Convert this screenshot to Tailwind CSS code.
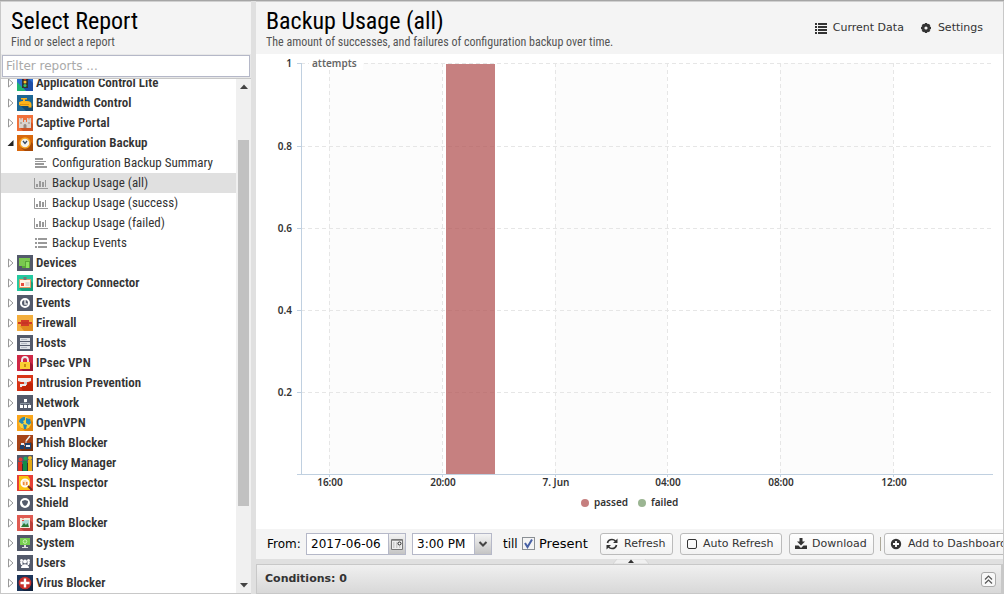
<!DOCTYPE html>
<html lang="en">
<head>
  <meta charset="UTF-8">
  <meta name="viewport" content="width=device-width, initial-scale=1.0">
  <title>Reports</title>
  <script src="https://cdn.jsdelivr.net/npm/@tailwindcss/browser@4"></script>
</head>
<body class="h-screen overflow-hidden flex bg-[#e0e0e0] border-t border-[#a5a5a5] text-[#333] font-['Roboto_Condensed','Liberation_Sans_Narrow',Roboto,sans-serif]">

  <!-- Report tree -->
  <aside class="w-[251px] shrink-0 flex flex-col bg-white border-l border-b border-[#c8c8c8]">
    <header class="h-[53px] shrink-0 bg-[#f4f4f4] border-t border-[#d0d0d0] pl-2.5 pt-[5px]">
      <h1 class="text-2xl leading-7 text-black">Select Report</h1>
      <p class="text-xs leading-[14px] text-[#555]">Find or select a report</p>
    </header>
    <div class="shrink-0 p-px bg-[#e8e8e8] border-b border-[#c8c8c8]">
      <input type="text" aria-label="Filter reports" placeholder="Filter reports ..."
             class="block w-full h-[22px] px-[3px] border border-[#b5b8c8] bg-white text-xs text-black placeholder:text-[#a9a9a9] font-['DejaVu_Sans',sans-serif]">
    </div>
    <div class="flex-1 min-h-0 flex">
      <nav class="flex-1 min-w-0 overflow-hidden" aria-label="Reports">
        <ul id="tree" class="-mt-1.5 text-[13px] leading-5"></ul>
      </nav>
      <div class="w-[15px] shrink-0 flex flex-col items-center bg-[#f0f0f0]">
        <svg class="h-[61px] w-2 shrink-0" viewBox="0 0 8 61"><path d="M0 10h8L4 5.500z" fill="#444"/></svg>
        <div class="w-[11px] h-[366px] bg-[#c1c1c1]"></div>
        <svg class="mt-auto h-4 w-2 shrink-0" viewBox="0 0 8 16"><path d="M0 6h8L4 10.500z" fill="#444"/></svg>
      </div>
    </div>
  </aside>

  <!-- Report -->
  <main class="ml-[5px] flex-1 min-w-0 flex flex-col border-r border-[#c8c8c8]">
    <header class="h-[53px] shrink-0 flex justify-between bg-[#f4f4f4] border-t border-[#d0d0d0] pl-2.5 pr-5">
      <div class="pt-[5px]">
        <h2 class="text-2xl leading-7 text-black">Backup Usage (all)</h2>
        <p class="text-xs leading-[14px] text-[#555]">The amount of successes, and failures of configuration backup over time.</p>
      </div>
      <div class="flex items-center gap-4 text-[11px] leading-4 font-['DejaVu_Sans',sans-serif]">
        <button class="flex items-center gap-1.5">
          <svg class="w-3 h-3" viewBox="0 0 12 12" fill="#333"><path d="M0 1h2v2H0zM3 1h9v2H3zM0 4h2v2H0zM3 4h9v2H3zM0 7h2v2H0zM3 7h9v2H3zM0 10h2v2H0zM3 10h9v2H3z"/></svg>
          Current Data
        </button>
        <button class="flex items-center gap-1.5">
          <svg class="w-3 h-3" viewBox="0 0 12 12"><path d="M6 1v10M1 6h10M2.500 2.500l7 7M9.500 2.500l-7 7" stroke="#333" stroke-width="2.400"/><circle cx="6" cy="6" r="3" fill="none" stroke="#333" stroke-width="2.400"/><circle cx="6" cy="6" r="1.600" fill="#f4f4f4"/></svg>
          Settings
        </button>
      </div>
    </header>

    <section class="flex-1 min-h-0 bg-white">
      <svg id="chart" class="w-full h-full" viewBox="0 0 747 475" role="img" aria-label="Backup usage chart"
           font-family="'Source Sans Pro','Noto Sans','Open Sans',sans-serif" font-weight="600"></svg>
    </section>

    <!-- Time range toolbar -->
    <form class="h-[30px] shrink-0 flex items-center overflow-hidden whitespace-nowrap bg-[#f4f4f4] pl-[11px] text-xs text-black font-['DejaVu_Sans',sans-serif]">
      <label for="fromDate" class="w-[39px] shrink-0">From:</label>
      <div class="w-[100px] h-[22px] shrink-0 flex border border-[#b5b8c8] bg-white">
        <input type="text" id="fromDate" value="2017-06-06" class="flex-1 min-w-0 pl-1">
        <button type="button" aria-label="Pick a date" class="w-[17px] flex items-center justify-center border-l border-[#b5b8c8] bg-linear-to-b from-[#f4f4f4] to-[#c4c4c4]">
          <svg class="w-3 h-3" viewBox="0 0 12 12"><path d="M.5 1.500h11v10H.5z" fill="#eee" stroke="#777"/><path d="M1 2h10v1H1z" fill="#999"/><path d="M2 5h1.500M2 7h1.500M2 9h1.500M5 5h1.500M5 7h1.500M5 9h1.500M8 9h1.500" stroke="#aaa"/><circle cx="8.500" cy="5.500" r="1.500" fill="#fff" stroke="#222"/></svg>
        </button>
      </div>
      <div class="w-20 h-[22px] ml-1.5 shrink-0 relative border border-[#b5b8c8] bg-white">
        <select aria-label="From time" class="appearance-none w-full h-full pl-1 bg-transparent">
          <option>3:00 PM</option>
        </select>
        <span class="absolute inset-y-0 right-0 w-[17px] flex items-center justify-center pointer-events-none border-l border-[#b5b8c8] bg-linear-to-b from-[#f4f4f4] to-[#c4c4c4]">
          <svg class="w-2.5 h-2.5" viewBox="0 0 10 10"><path d="M1.500 3L5 6.500 8.500 3" fill="none" stroke="#444" stroke-width="2"/></svg>
        </span>
      </div>
      <label for="present" class="ml-[11px] shrink-0 flex items-center">
        <span class="w-[19px]">till</span>
        <span class="relative w-[13px] h-[13px] mr-1">
          <input type="checkbox" id="present" checked class="peer block appearance-none w-full h-full border border-[#8a8f94] bg-[#f4f4f4]">
          <svg class="hidden peer-checked:block absolute inset-0 pointer-events-none" viewBox="0 0 13 13"><path d="M3 6l2.500 4L10 2.500" fill="none" stroke="#4861a5" stroke-width="2"/></svg>
        </span>
        <span class="w-[61px] text-[13px]">Present</span>
      </label>
      <div class="flex items-center gap-[7px] text-[11px] text-[#333]">
        <button type="button" class="h-[22px] w-[73px] shrink-0 flex items-center gap-1.5 px-[5px] rounded-[3px] border border-[#bbb] bg-linear-to-b from-white to-[#f2f2f2]">
          <svg class="w-3 h-3 shrink-0" viewBox="0 0 12 12" fill="none" stroke="#333" stroke-width="1.700"><path d="M1.500 5C2 2.800 4 1.500 6 1.500c1.500 0 2.600.6 3.500 1.500M10.500 7c-.5 2.200-2.500 3.500-4.500 3.500-1.500 0-2.600-.6-3.500-1.500"/><path d="M11.500.5V5H7zM.5 11.500V7H5z" fill="#333" stroke="none"/></svg>
          Refresh
        </button>
        <button type="button" class="h-[22px] w-[102px] shrink-0 flex items-center gap-1.5 px-1.5 rounded-[3px] border border-[#bbb] bg-linear-to-b from-white to-[#f2f2f2]">
          <svg class="w-2.5 h-2.5 shrink-0" viewBox="0 0 10 10"><rect x=".5" y=".5" width="9" height="9" rx="1.500" fill="none" stroke="#333"/></svg>
          Auto Refresh
        </button>
        <button type="button" class="h-[22px] w-[85px] shrink-0 flex items-center gap-[5px] px-[5px] rounded-[3px] border border-[#bbb] bg-linear-to-b from-white to-[#f2f2f2]">
          <svg class="w-3 h-3 shrink-0" viewBox="0 0 12 12" fill="#333"><path d="M4.500 0h3v3.500H10L6 7.500 2 3.500h2.500z"/><path d="M0 7.500h3.500L6 10l2.500-2.500H12V11H0z"/></svg>
          Download
        </button>
      </div>
      <span class="w-px h-3.5 ml-1.5 mr-[3px] shrink-0 bg-[#aca899]"></span>
      <button type="button" class="h-[22px] shrink-0 flex items-center gap-1.5 px-[5px] rounded-[3px] border border-[#bbb] bg-linear-to-b from-white to-[#f2f2f2] text-[11px] text-[#333]">
        <svg class="w-3 h-3 shrink-0" viewBox="0 0 12 12"><circle cx="6" cy="6" r="5.200" fill="#333"/><path d="M6 3v6M3 6h6" stroke="#fff" stroke-width="1.800"/></svg>
        Add to Dashboard
      </button>
    </form>

    <!-- Collapse handle -->
    <div class="h-[5px] shrink-0 flex justify-center pl-0.5">
      <svg class="w-9 h-[5px]" viewBox="0 0 36 5"><path d="M0 5l4-5h28l4 5z" fill="#f0f0f0" stroke="#ccc" stroke-width=".6"/><path d="M15 4h6l-3-3.500z" fill="#333"/></svg>
    </div>

    <footer class="h-[30px] shrink-0 flex items-center justify-between pl-2 pr-[5px] border border-r-2 border-[#c8c8c8] bg-linear-to-b from-[#f0f0f0] to-[#d8d8d8]">
      <h3 class="text-[11px] font-bold font-['DejaVu_Sans',sans-serif]">Conditions: 0</h3>
      <button type="button" aria-label="Expand conditions" class="w-[15px] h-[15px] flex items-center justify-center rounded-[3px] border border-[#aaa] bg-[#f8f8f8]">
        <svg class="w-[9px] h-[9px]" viewBox="0 0 9 9"><path d="M1 4.500L4.500 1 8 4.500M1 8.500L4.500 5 8 8.500" fill="none" stroke="#555" stroke-width="1.200"/></svg>
      </button>
    </footer>
  </main>

  <script>
    // 16x16 module icons
    const icons = {
      appLite: '<path fill="#2f6fd0" d="M0 0h16v16H0z"/><path fill="#1d4fa8" d="M10 2l6 6v8H9l-3-3z"/><path fill="#20b573" d="M0 7l9 9H0z"/><path fill="#333" d="M5 1h6v12H5z"/><circle cx="8" cy="3.500" r="1.500" fill="#e53935"/><circle cx="8" cy="7" r="1.500" fill="#fbc02d"/><circle cx="8" cy="10.500" r="1.500" fill="#35c46a"/>',
      bandwidth: '<path fill="#1d6794" d="M0 0h16v16H0z"/><path fill="#134a70" d="M4 11l5 5h7v-5z"/><path fill="#fbb21b" d="M4 3h6v1.500H8V6h2c3 0 4.500 1.500 4.500 4v2.500h-3V11H4l-2-1V7l3-1h1V4.500H4z"/><path fill="#e0930e" d="M3 9h9v1H3z"/>',
      portal: '<path fill="#f0703a" d="M0 0h16v16H0z"/><path fill="#cf5524" d="M13 6l3 3v7H6l-3-3z"/><path fill="#d9d4ce" d="M2 3h1.500v1.500h1V3H6v4h1V5h2v2h1V3h1.500v1.500h1V3H14v10H2z"/><path fill="#94877d" d="M6.500 13v-3q1.500-2 3 0v3zM3.500 7h1v2h-1zM11.500 7h1v2h-1z"/>',
      backup: '<path fill="#d9680d" d="M0 0h16v16H0z"/><path fill="#a84a06" d="M12 5l4 4v7H8l-4-3z"/><circle cx="8" cy="8" r="5" fill="#f2f2ee" stroke="#f5a623" stroke-width="1.500"/><path d="M6 6l2 2.500L10 6" fill="none" stroke="#34495e" stroke-width="1.300"/>',
      devices: '<path fill="#535a6b" d="M0 0h16v16H0z"/><path fill="#7ac74f" d="M2 3h11v8H2z"/><path fill="#5aa636" d="M5 11h4v2H5zM8 6h5v7H8z"/><path fill="#8be05c" d="M9 7h3v6H9z"/>',
      directory: '<path fill="#25c9a0" d="M0 0h16v16H0z"/><path fill="#15a07d" d="M14 6l2 2v8H5l-3-3z"/><path fill="#fff4e4" stroke="#e79a65" d="M2.500 4.500h11v8h-11z"/><path fill="#777" d="M6.500 2h3v3h-3z"/><path fill="#e84c3d" d="M4 8h3v3H4z"/><path d="M8.500 8h4M8.500 10h4" stroke="#bbb"/>',
      events: '<path fill="#535a6b" d="M0 0h16v16H0z"/><circle cx="8" cy="8" r="4" fill="#535a6b" stroke="#fff" stroke-width="2"/><path d="M8 5v4h2.500" fill="none" stroke="#e8e8e8" stroke-width="1.500"/>',
      firewall: '<path fill="#f3ae3d" d="M0 0h16v16H0z"/><path fill="#e18a1f" d="M14 8l2 1v7H7l-4-5z"/><path fill="#d23a27" d="M4 5h8v6H4z"/><path fill="#d23a27" d="M1 7h4v2H1zM11 7h4v2h-4z"/><path fill="#b93020" d="M5 7.500h6v1H5z"/>',
      hosts: '<path fill="#535a6b" d="M0 0h16v16H0z"/><path fill="#dfe3e8" d="M3 3h10v3H3zM3 7h10v3H3zM3 11h10v3H3z"/><path d="M4 4.500h6M4 8.500h6M4 12.500h6" stroke="#b4bac4"/>',
      ipsec: '<path fill="#cf2846" d="M0 0h16v16H0z"/><path fill="#9e1831" d="M13 7l3 3v6H6l-3-3z"/><path d="M5 8V5q0-3 3-3t3 3v3" fill="none" stroke="#eee" stroke-width="1.800"/><path fill="#fbd034" d="M3 7h10v7H3z"/><path fill="#c58b13" d="M7 9h2v3H7z"/>',
      intrusion: '<path fill="#d83417" d="M0 0h16v16H0z"/><path fill="#c02408" d="M13 7l3 2v7H6l-2-3z"/><path fill="#f3eeee" d="M1 3h13v3l-3 1H4L1 6z"/><path fill="#ccc" d="M7 7h3v3H7z"/><path fill="#eee" d="M3 9h6v2H5v1H3z"/>',
      network: '<path fill="#535a6b" d="M0 0h16v16H0z"/><path d="M8 6v2M3.500 10V8.500h9V10M8 8v2" fill="none" stroke="#8a94a0"/><path fill="#fff" d="M7 4h3v3H7zM3 10h3v3H3zM7 10h3v3H7zM11 10h3v3h-3z"/>',
      openvpn: '<path fill="#f9a61c" d="M0 0h16v16H0z"/><path fill="#df850c" d="M13 4l3 3v9H8l-4-3z"/><circle cx="8" cy="8" r="6" fill="#f8d440"/><path fill="#2388b8" d="M2 7c0-3 3-5 6-5v3L6 6l1 2-2 1zM9 3l4 1 1 4-2 2-3-2V6zM6 9l4 1-1 4H7z"/>',
      phish: '<path fill="#a64419" d="M0 0h16v16H0z"/><path fill="#78300f" d="M14 7l2 2v7H5l-3-3z"/><path d="M13 1L9 6" stroke="#eee" stroke-width="1.500"/><path d="M9 6v3q-2 3-4 0" fill="none" stroke="#ddd"/><path fill="#1d426d" d="M3 10h4v4H3zM8 8h6v6H8z"/><path fill="#e8edf2" d="M9 10h4v2H9zM4 8h3v2H4z"/>',
      policy: '<path fill="#535a6b" d="M0 0h16v16H0z"/><circle cx="3.500" cy="4.500" r="2" fill="#e53e30"/><circle cx="8.500" cy="3.500" r="2" fill="#20a859"/><circle cx="13" cy="3" r="2" fill="#f3bd27"/><path fill="#d92f24" d="M1 7h4v9H1z"/><path fill="#118d46" d="M6 6h4v10H6z"/><path fill="#e5a915" d="M11 5h4v11h-4z"/><path fill="#333" d="M5 9h1v7H5zM10 8h1v8h-1z"/>',
      ssl: '<path fill="#e64035" d="M0 0h16v16H0z"/><path fill="#fbc312" d="M2 1h9l2 3v11H2z"/><circle cx="8" cy="8" r="3.800" fill="#fce5c2" stroke="#fff" stroke-width="1.500"/><path d="M11 11l4 4" stroke="#7a2b1c" stroke-width="2"/><path fill="#f0893e" d="M6 7h1.500v3H6zM9 7h1.500v3H9z"/>',
      shield: '<path fill="#535a6b" d="M0 0h16v16H0z"/><circle cx="8" cy="8" r="5" fill="#fff"/><path fill="#535a6b" d="M8 5l3 1c0 2.500-1 4-3 5-2-1-3-2.500-3-5z"/>',
      spam: '<path fill="#df5b52" d="M0 0h16v16H0z"/><path fill="#b94039" d="M13 5l3 3v8H7l-4-3z"/><path fill="#f4ebdc" d="M3 3h2l1 1 1-1h6v10H3z"/><path fill="#a9d7d2" d="M5 5h7v6H5z"/><path fill="#287a35" d="M4 12l3-4 2 2 1.500-2L12 12z"/><path fill="#e84c3d" d="M5 5h2v1H5z"/>',
      system: '<path fill="#535a6b" d="M0 0h16v16H0z"/><path fill="#77cf4f" d="M3 3h10v7H3z"/><path fill="#ddd" d="M7 10h2v2H7zM5 12h6v1H5z"/><circle cx="8" cy="6.500" r="1.800" fill="none" stroke="#c9f2b5"/>',
      users: '<path fill="#535a6b" d="M0 0h16v16H0z"/><g fill="#fff"><circle cx="4.500" cy="5.500" r="1.500"/><circle cx="11.500" cy="5.500" r="1.500"/><circle cx="8" cy="6.500" r="2"/><path d="M3 7h2.500v3H4zM13 7h-2.500v3H12zM4 13c0-5 8-5 8 0z"/></g>',
      virus: '<path fill="#1d355a" d="M0 0h16v16H0z"/><path fill="#12233f" d="M13 5l3 3v8H7l-4-4z"/><circle cx="8" cy="8" r="6.300" fill="#c72f2b"/><path d="M8 3.500v9M3.500 8h9" stroke="#fff" stroke-width="2.400"/>'
    };

    // 14x12 report type icons
    const types = {
      text: '<path d="M1 1h8v2H1zM1 4h11v1H1zM1 6h9v2H1zM1 9h12v2H1z" fill="#999"/>',
      chart: '<path d="M.5 1v10.500H14" fill="none" stroke="#999"/><path d="M2 7h2v3H2zM5 4h2v6H5zM8 5h2v5H8zM11 3h1v7h-1z" fill="#999"/>',
      list: '<path d="M1 1h2v2H1zM1 5h2v2H1zM1 9h2v2H1zM4 1h9v2H4zM4 5h9v2H4zM4 9h9v2H4z" fill="#999"/>'
    };

    const modules = [
      ['Application Control Lite', 'appLite'],
      ['Bandwidth Control', 'bandwidth'],
      ['Captive Portal', 'portal'],
      ['Configuration Backup', 'backup', [
        ['Configuration Backup Summary', 'text'],
        ['Backup Usage (all)', 'chart'],
        ['Backup Usage (success)', 'chart'],
        ['Backup Usage (failed)', 'chart'],
        ['Backup Events', 'list']
      ]],
      ['Devices', 'devices'],
      ['Directory Connector', 'directory'],
      ['Events', 'events'],
      ['Firewall', 'firewall'],
      ['Hosts', 'hosts'],
      ['IPsec VPN', 'ipsec'],
      ['Intrusion Prevention', 'intrusion'],
      ['Network', 'network'],
      ['OpenVPN', 'openvpn'],
      ['Phish Blocker', 'phish'],
      ['Policy Manager', 'policy'],
      ['SSL Inspector', 'ssl'],
      ['Shield', 'shield'],
      ['Spam Blocker', 'spam'],
      ['System', 'system'],
      ['Users', 'users'],
      ['Virus Blocker', 'virus']
    ];
    const selected = 'Backup Usage (all)';

    function renderReport([name, type]) {
      return `
        <li><a href="#" class="flex items-center h-5 pl-[33px] gap-1 whitespace-nowrap ${name === selected ? 'bg-[#e0e0e0]' : ''}">
          <svg class="w-3.5 h-3 shrink-0" viewBox="0 0 14 12">${types[type]}</svg>${name}
        </a></li>`;
    }

    function renderModule([name, icon, reports]) {
      const arrow = reports
        ? '<path d="M6.500 2v6h-6z" fill="#222"/>'
        : '<path d="M1.500 1v8L6 5z" fill="#fff" stroke="#999"/>';
      return `
        <li>
          <a href="#" class="flex items-center h-5 pl-1.5 font-semibold whitespace-nowrap">
            <svg class="w-[7px] h-2.5 mr-[3px] shrink-0" viewBox="0 0 7 10">${arrow}</svg>
            <svg class="w-4 h-4 mr-[3px] shrink-0" viewBox="0 0 16 16">${icons[icon]}</svg>${name}
          </a>
          ${reports ? `<ul>${reports.map(renderReport).join('')}</ul>` : ''}
        </li>`;
    }

    document.getElementById('tree').innerHTML = modules.map(renderModule).join('');

    // Chart
    const plot = { left: 45, right: 736, top: 9, bottom: 420 };
    const xTicks = [[73, '16:00'], [186, '20:00'], [299, '7. Jun'], [411, '04:00'], [524, '08:00'], [637, '12:00']];
    const yTicks = [[9, '1'], [92, '0.8'], [174, '0.6'], [256, '0.4'], [338, '0.2']];

    function renderChart() {
      let out = '';
      for (let i = 0; i < xTicks.length; i += 2) {
        const x = xTicks[i][0];
        out += `<rect x="${x}" y="${plot.top}" width="${xTicks[i + 1][0] - x}" height="${plot.bottom - plot.top}" fill="#fcfcfc"/>`;
      }
      xTicks.forEach(([x, label]) => {
        out += `<path d="M${x + 0.5} ${plot.top}V${plot.bottom}" stroke="#e6e6e6" stroke-dasharray="4 3"/>
          <path d="M${x + 0.5} ${plot.bottom}v3" stroke="#c0d0e0"/>
          <text x="${x + 1}" y="432" text-anchor="middle" font-size="10" fill="#333">${label}</text>`;
      });
      yTicks.forEach(([y, label]) => {
        out += `<path d="M${plot.left} ${y + 0.5}H${plot.right}" stroke="#e6e6e6" stroke-dasharray="4 3"/>
          <path d="M41 ${y + 0.5}h4" stroke="#c0d0e0"/>
          <text x="36" y="${y + 4}" text-anchor="end" font-size="10" fill="#333">${label}</text>`;
      });
      out += `<rect x="190" y="10" width="49" height="410" fill="#b55a5a" fill-opacity="0.77"/>
        <path d="M45.500 9v411M41 420.500H737" stroke="#c0d0e0" fill="none"/>
        <rect x="53" y="2" width="54" height="14" fill="#fff"/>
        <text x="56" y="13" font-size="10" fill="#666">attempts</text>
        <circle cx="329" cy="449" r="4" fill="#c67f7f"/>
        <text x="338" y="452" font-size="10" fill="#333">passed</text>
        <circle cx="386" cy="449" r="4" fill="#9bb592"/>
        <text x="395" y="452" font-size="10" fill="#333">failed</text>`;
      document.getElementById('chart').innerHTML = out;
    }

    renderChart();
  </script>
</body>
</html>
